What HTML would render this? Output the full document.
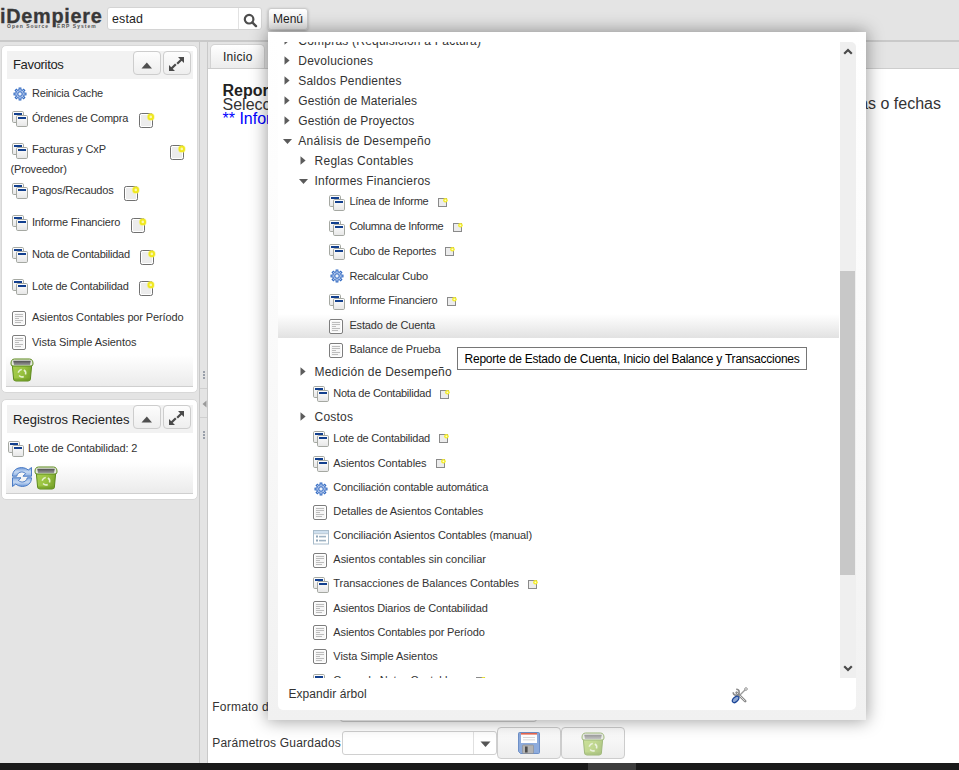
<!DOCTYPE html><html><head><meta charset="utf-8"><style>
*{box-sizing:border-box;margin:0;padding:0}
html,body{width:959px;height:770px;overflow:hidden;background:#e4e4e4;font-family:"Liberation Sans",sans-serif;color:#333}
.a{position:absolute}
.t{position:absolute;white-space:nowrap;line-height:1}
svg.a{overflow:visible}
</style></head><body>

<svg width="0" height="0" style="position:absolute">
<defs>
<linearGradient id="wg" x1="0" y1="0" x2="0" y2="1"><stop offset="0" stop-color="#ffffff"/><stop offset="1" stop-color="#e6e6e6"/></linearGradient>
<linearGradient id="bing" x1="0" y1="0" x2="1" y2="0.3"><stop offset="0" stop-color="#a8cf50"/><stop offset="0.6" stop-color="#98c23f"/><stop offset="1" stop-color="#7ea82f"/></linearGradient>
<linearGradient id="binin" x1="0" y1="0" x2="0" y2="1"><stop offset="0" stop-color="#4f4f4f"/><stop offset="1" stop-color="#9a9a9a"/></linearGradient>
<linearGradient id="refg" x1="0" y1="0" x2="0" y2="1"><stop offset="0" stop-color="#6f9ada"/><stop offset="0.5" stop-color="#c6d9f2"/><stop offset="1" stop-color="#8fb2e3"/></linearGradient>
<symbol id="win" viewBox="0 0 16 16">
 <rect x="0.5" y="0.5" width="11" height="11" rx="1.2" fill="url(#wg)" stroke="#a5a8a2"/>
 <rect x="2" y="2" width="8" height="2" fill="#123f8e"/>
 <rect x="4.5" y="4.5" width="11" height="11" rx="1.2" fill="url(#wg)" stroke="#a5a8a2"/>
 <rect x="6" y="6" width="8" height="2" fill="#123f8e"/>
</symbol>
<symbol id="doc" viewBox="0 0 16 16">
 <rect x="1.5" y="1.5" width="13" height="14" rx="1.5" fill="#fff" stroke="#7d7d7d"/>
 <rect x="3" y="3" width="10" height="11" fill="#f6f6f6"/>
 <rect x="4" y="4" width="8" height="1" fill="#bdbdbd"/>
 <rect x="4" y="6" width="8" height="1" fill="#bdbdbd"/>
 <rect x="4" y="8" width="4" height="1" fill="#bdbdbd"/>
 <rect x="4" y="10" width="8" height="1" fill="#bdbdbd"/>
 <rect x="4" y="12" width="6" height="1" fill="#bdbdbd"/>
</symbol>
<symbol id="gear" viewBox="0 0 14 14">
 <g fill="#2f68c1"><circle cx="7" cy="7" r="4.7"/><rect x="5.6" y="0.5" width="2.8" height="13" transform="rotate(0 7 7)"/><rect x="5.6" y="0.5" width="2.8" height="13" transform="rotate(45 7 7)"/><rect x="5.6" y="0.5" width="2.8" height="13" transform="rotate(90 7 7)"/><rect x="5.6" y="0.5" width="2.8" height="13" transform="rotate(135 7 7)"/></g>
 <g fill="#b0c5ea"><circle cx="7" cy="7" r="3.7"/><rect x="6.45" y="1.5" width="1.1" height="11" transform="rotate(0 7 7)"/><rect x="6.45" y="1.5" width="1.1" height="11" transform="rotate(45 7 7)"/><rect x="6.45" y="1.5" width="1.1" height="11" transform="rotate(90 7 7)"/><rect x="6.45" y="1.5" width="1.1" height="11" transform="rotate(135 7 7)"/></g>
 <circle cx="7" cy="7" r="2.3" fill="#c8d7f1" stroke="#3d72c6" stroke-width="1"/>
 <circle cx="7" cy="7" r="0.9" fill="#fff"/>
</symbol>
<symbol id="note9" viewBox="0 0 10 10">
 <rect x="0.5" y="0.5" width="8" height="8" fill="#ececec" stroke="#8a8a8a"/>
 <circle cx="7.4" cy="2.3" r="2.3" fill="#f3ec2c"/>
 <circle cx="7.4" cy="2.3" r="0.9" fill="#fdfbd0"/>
</symbol>
<symbol id="note14" viewBox="0 0 16 16">
 <rect x="0.5" y="0.5" width="13" height="14" rx="1.8" fill="#fff" stroke="#707070"/>
 <rect x="2" y="2" width="10" height="11" fill="#ececec"/>
 <circle cx="11.8" cy="3.9" r="3.9" fill="#f7f26a" opacity=".6"/>
 <circle cx="11.8" cy="3.9" r="3.2" fill="#f0e81e"/>
 <circle cx="11.8" cy="3.9" r="1.3" fill="#fbf7b0"/>
</symbol>
<symbol id="triR" viewBox="0 0 6 9"><path d="M0.5 0.3 L5.6 4.5 L0.5 8.7Z" fill="#5c5c5c"/></symbol>
<symbol id="triD" viewBox="0 0 9 6"><path d="M0 0 L9 0 L4.5 5Z" fill="#5a5a5a"/></symbol>
<symbol id="bin" viewBox="0 0 24 24">
 <path d="M2.3 7 L3.6 21 Q3.9 23 6 23 L18 23 Q20.1 23 20.4 21 L21.7 7Z" fill="url(#bing)" stroke="#5d8a1c" stroke-width="1"/>
 <rect x="3.5" y="20.5" width="17" height="2" fill="#6e9a26" opacity=".6"/>
 <path d="M1 6 Q0.8 1.2 4.5 1 L19.5 1 Q23.2 1.2 23 6 Q23 8 21 8 L3 8 Q1 8 1 6Z" fill="#e4e9dc" stroke="#5d8a1c" stroke-width="1"/>
 <path d="M3.2 2.8 L20.8 2.8 L20 7 L4 7Z" fill="url(#binin)"/>
 <circle cx="12" cy="15.2" r="3.7" fill="none" stroke="#e6f1cf" stroke-width="1.5" stroke-dasharray="5 2.75" transform="rotate(-60 12 15.2)"/>
</symbol>
<symbol id="refresh" viewBox="0 0 20 20">
 <path d="M0.5 9.2 C0.5 3.5 4.8 0.6 9.5 0.6 C12.3 0.6 14.6 1.6 16.2 3 L19.5 0.5 L19.5 9.2 L11 9.2 L13.6 6.6 C12.6 5.6 11.2 5 9.6 5 C7.2 5 5.2 6.6 4.7 9.2 Z" fill="url(#refg)" stroke="#3c70c0" stroke-width="0.9" stroke-linejoin="round"/>
 <path d="M0.5 9.2 C0.5 3.5 4.8 0.6 9.5 0.6 C12.3 0.6 14.6 1.6 16.2 3 L19.5 0.5 L19.5 9.2 L11 9.2 L13.6 6.6 C12.6 5.6 11.2 5 9.6 5 C7.2 5 5.2 6.6 4.7 9.2 Z" fill="url(#refg)" stroke="#3c70c0" stroke-width="0.9" stroke-linejoin="round" transform="rotate(180 10 10)"/>
</symbol>
<symbol id="list" viewBox="0 0 16 16"><rect x="0.5" y="0.5" width="15" height="13.5" fill="#fff" stroke="#a9bccb"/><rect x="1" y="1" width="14" height="2.6" fill="#cfe0ef"/><rect x="1" y="3.4" width="14" height="0.8" fill="#a9bccb"/><rect x="3" y="5.5" width="2" height="2" fill="#8fa5b8"/><rect x="6" y="5.8" width="7" height="1.6" fill="#9fb3c4"/><rect x="3" y="9.5" width="2" height="2" fill="#8fa5b8"/><rect x="6" y="9.8" width="7" height="1.6" fill="#9fb3c4"/></symbol></defs></svg>

<div class="a" style="left:0px;top:40px;width:959px;height:2px;background:#c9c9c9"></div>
<div class="t" style="left:0.3px;top:6.6px;font-size:19.3px;font-weight:bold;color:#383838;letter-spacing:0.7px;transform:scaleX(1.03);transform-origin:0 0;-webkit-text-stroke:0.3px #383838">iDempiere</div>
<div class="t" style="left:7px;top:23.6px;font-size:5px;font-weight:bold;color:#555;letter-spacing:1px">Open Source</div>
<div class="t" style="left:57px;top:23.6px;font-size:5px;font-weight:bold;color:#555;letter-spacing:1.05px">ERP System</div>
<div class="a" style="left:107px;top:7px;width:155px;height:23px;background:#fff;border:1px solid #d4d4d4;border-radius:3px"></div>
<div class="a" style="left:238px;top:8px;width:1px;height:21px;background:#e2e2e2"></div>
<div class="t" style="left:112px;top:12.70px;font-size:12.4px;color:#1e1e1e;letter-spacing:0.15px;">estad</div>
<svg class="a" style="left:243px;top:12.5px" width="15" height="15" viewBox="0 0 15 15"><circle cx="6.1" cy="6.2" r="4.3" fill="none" stroke="#4d4d4d" stroke-width="2.2"/><path d="M9.3 9.4 L13 13.1" stroke="#4d4d4d" stroke-width="2.4" stroke-linecap="round"/></svg>
<div class="a" style="left:268px;top:8px;width:40px;height:22px;background:linear-gradient(#ffffff,#e6e6e6);border:1px solid #cbcbcb;border-radius:3px;box-shadow:0 1px 3px rgba(0,0,0,.28)"></div>
<div class="t" style="left:273px;top:13.44px;font-size:12px;color:#1e1e1e;letter-spacing:0.0px;">Menú</div>
<div class="a" style="left:0px;top:42px;width:199px;height:721px;background:#e4e4e4"></div>
<div class="a" style="left:1px;top:45px;width:197px;height:348px;background:#fff;border:1px solid #d8d8d8;border-radius:5px"></div>
<div class="a" style="left:7px;top:51px;width:186px;height:28px;background:#f2f2f2"></div>
<div class="t" style="left:13px;top:58.30px;font-size:13px;color:#222;letter-spacing:-0.325px;">Favoritos</div>
<div class="a" style="left:133px;top:51px;width:28px;height:24px;background:linear-gradient(#fdfdfd,#eeeeee);border:1px solid #cdcdcd;border-radius:4px"></div>
<div class="a" style="left:163px;top:51px;width:28px;height:24px;background:linear-gradient(#fdfdfd,#eeeeee);border:1px solid #cdcdcd;border-radius:4px"></div>
<svg class="a" style="left:141px;top:61px" width="12" height="8"><path d="M0.5 7.5 L5.8 1.5 L11 7.5Z" fill="#4f4f4f"/></svg>
<svg class="a" style="left:168px;top:56px" width="17" height="16"><path d="M10 1 L16 1 L16 7Z M1 9 L1 15 L7 15Z" fill="#4a4a4a"/><path d="M13.5 3.5 L9.2 7.8 M3.5 12.5 L7.8 8.2" stroke="#4a4a4a" stroke-width="2.2"/></svg>
<svg class="a" style="left:12.5px;top:87px" width="14" height="14" viewBox="0 0 14 14"><use href="#gear"/></svg>
<div class="t" style="left:32px;top:87.99px;font-size:11px;color:#333;letter-spacing:-0.216px;">Reinicia Cache</div>
<svg class="a" style="left:12px;top:111px" width="16" height="16" viewBox="0 0 16 16"><use href="#win"/></svg>
<div class="t" style="left:32px;top:112.79px;font-size:11px;color:#333;letter-spacing:-0.208px;">Órdenes de Compra</div>
<svg class="a" style="left:139px;top:113px" width="16" height="16" viewBox="0 0 16 16"><use href="#note14"/></svg>
<svg class="a" style="left:12px;top:143px" width="16" height="16" viewBox="0 0 16 16"><use href="#win"/></svg>
<div class="t" style="left:32px;top:144.09px;font-size:11px;color:#333;letter-spacing:-0.093px;">Facturas y CxP</div>
<svg class="a" style="left:170px;top:145px" width="16" height="16" viewBox="0 0 16 16"><use href="#note14"/></svg>
<div class="t" style="left:10.5px;top:163.69px;font-size:11px;color:#333;letter-spacing:-0.17px;">(Proveedor)</div>
<svg class="a" style="left:12px;top:183px" width="16" height="16" viewBox="0 0 16 16"><use href="#win"/></svg>
<div class="t" style="left:32px;top:184.99px;font-size:11px;color:#333;letter-spacing:-0.155px;">Pagos/Recaudos</div>
<svg class="a" style="left:124px;top:186px" width="16" height="16" viewBox="0 0 16 16"><use href="#note14"/></svg>
<svg class="a" style="left:12px;top:215px" width="16" height="16" viewBox="0 0 16 16"><use href="#win"/></svg>
<div class="t" style="left:32px;top:217.29px;font-size:11px;color:#333;letter-spacing:-0.201px;">Informe Financiero</div>
<svg class="a" style="left:131px;top:218px" width="16" height="16" viewBox="0 0 16 16"><use href="#note14"/></svg>
<svg class="a" style="left:12px;top:247px" width="16" height="16" viewBox="0 0 16 16"><use href="#win"/></svg>
<div class="t" style="left:32px;top:248.99px;font-size:11px;color:#333;letter-spacing:-0.249px;">Nota de Contabilidad</div>
<svg class="a" style="left:140px;top:250px" width="16" height="16" viewBox="0 0 16 16"><use href="#note14"/></svg>
<svg class="a" style="left:12px;top:279px" width="16" height="16" viewBox="0 0 16 16"><use href="#win"/></svg>
<div class="t" style="left:32px;top:280.99px;font-size:11px;color:#333;letter-spacing:-0.212px;">Lote de Contabilidad</div>
<svg class="a" style="left:139px;top:281px" width="16" height="16" viewBox="0 0 16 16"><use href="#note14"/></svg>
<svg class="a" style="left:11px;top:310px" width="16" height="16" viewBox="0 0 16 16"><use href="#doc"/></svg>
<div class="t" style="left:32px;top:311.89px;font-size:11px;color:#333;letter-spacing:-0.129px;">Asientos Contables por Período</div>
<svg class="a" style="left:11px;top:334px" width="16" height="16" viewBox="0 0 16 16"><use href="#doc"/></svg>
<div class="t" style="left:32px;top:336.69px;font-size:11px;color:#333;letter-spacing:-0.056px;">Vista Simple Asientos</div>
<div class="a" style="left:6px;top:355px;width:187px;height:32px;background:linear-gradient(#ffffff,#ebebeb);border-bottom:1px solid #cfcfcf"></div>
<svg class="a" style="left:10px;top:358px" width="24" height="24" viewBox="0 0 24 24"><use href="#bin"/></svg>
<div class="a" style="left:1px;top:399px;width:197px;height:101px;background:#fff;border:1px solid #d8d8d8;border-radius:5px"></div>
<div class="a" style="left:7px;top:405px;width:186px;height:28px;background:#f2f2f2"></div>
<div class="t" style="left:13px;top:412.50px;font-size:13px;color:#222;letter-spacing:0.011px;">Registros Recientes</div>
<div class="a" style="left:133px;top:405px;width:28px;height:24px;background:linear-gradient(#fdfdfd,#eeeeee);border:1px solid #cdcdcd;border-radius:4px"></div>
<div class="a" style="left:163px;top:405px;width:28px;height:24px;background:linear-gradient(#fdfdfd,#eeeeee);border:1px solid #cdcdcd;border-radius:4px"></div>
<svg class="a" style="left:141px;top:415px" width="12" height="8"><path d="M0.5 7.5 L5.8 1.5 L11 7.5Z" fill="#4f4f4f"/></svg>
<svg class="a" style="left:168px;top:410px" width="17" height="16"><path d="M10 1 L16 1 L16 7Z M1 9 L1 15 L7 15Z" fill="#4a4a4a"/><path d="M13.5 3.5 L9.2 7.8 M3.5 12.5 L7.8 8.2" stroke="#4a4a4a" stroke-width="2.2"/></svg>
<svg class="a" style="left:8px;top:441px" width="16" height="16" viewBox="0 0 16 16"><use href="#win"/></svg>
<div class="t" style="left:28px;top:443.29px;font-size:11px;color:#333;letter-spacing:-0.17px;">Lote de Contabilidad: 2</div>
<div class="a" style="left:6px;top:462px;width:187px;height:32px;background:linear-gradient(#ffffff,#ebebeb);border-bottom:1px solid #cfcfcf"></div>
<svg class="a" style="left:12px;top:467px" width="20" height="20" viewBox="0 0 20 20"><use href="#refresh"/></svg>
<svg class="a" style="left:34px;top:466px" width="24" height="24" viewBox="0 0 24 24"><use href="#bin"/></svg>
<div class="a" style="left:199px;top:42px;width:1px;height:721px;background:#c9c9c9"></div>
<div class="a" style="left:207px;top:42px;width:1px;height:721px;background:#c9c9c9"></div>
<div class="a" style="left:200px;top:388px;width:7px;height:1px;background:#cfcfcf"></div>
<div class="a" style="left:200px;top:417px;width:7px;height:1px;background:#cfcfcf"></div>
<div class="a" style="left:203px;top:371px;width:2px;height:2px;background:#9aa0aa"></div>
<div class="a" style="left:203px;top:374px;width:2px;height:2px;background:#9aa0aa"></div>
<div class="a" style="left:203px;top:377px;width:2px;height:2px;background:#9aa0aa"></div>
<div class="a" style="left:203px;top:431px;width:2px;height:2px;background:#9aa0aa"></div>
<div class="a" style="left:203px;top:434px;width:2px;height:2px;background:#9aa0aa"></div>
<div class="a" style="left:203px;top:437px;width:2px;height:2px;background:#9aa0aa"></div>
<svg class="a" style="left:202px;top:400px" width="5" height="8"><path d="M4.5 0.5 L0.5 4 L4.5 7.5Z" fill="#9a9a9a"/></svg>
<div class="a" style="left:208px;top:42px;width:751px;height:27px;background:#e4e4e4;border-bottom:1px solid #cdcdcd"></div>
<div class="a" style="left:210px;top:44px;width:55px;height:24px;background:linear-gradient(#ffffff,#ececec);border:1px solid #d3d3d3;border-bottom:none;border-radius:5px 5px 0 0"></div>
<div class="t" style="left:223px;top:51.14px;font-size:12px;color:#222;letter-spacing:0.28px;">Inicio</div>
<div class="a" style="left:208px;top:69px;width:751px;height:694px;background:#fff"></div>
<div class="t" style="left:222.5px;top:82.56px;font-size:16px;color:#222;font-weight:bold;">Reporte de Estado de Cuenta</div>
<div class="t" style="left:222.5px;top:96.66px;font-size:16px;color:#333;">Seleccione</div>
<div class="t" style="right:18px;top:96.2px;font-size:16px;color:#333">cuentas o fechas</div>
<div class="t" style="left:222.5px;top:110.66px;font-size:16px;color:#0000ff;">** Informe</div>
<div class="t" style="left:212.3px;top:701.24px;font-size:12px;color:#333;letter-spacing:0.22px;">Formato de Impresión</div>
<div class="a" style="left:340px;top:699px;width:197px;height:23px;background:#fff;border:1px solid #cfcfcf;border-radius:3px"></div>
<div class="t" style="left:212.3px;top:736.94px;font-size:12px;color:#333;letter-spacing:0.198px;">Parámetros Guardados</div>
<div class="a" style="left:342px;top:731px;width:155px;height:24px;background:#fff;border:1px solid #d0d0d0;border-radius:3px"></div>
<div class="a" style="left:473px;top:732px;width:1px;height:22px;background:#e0e0e0"></div>
<svg class="a" style="left:480px;top:741px" width="11" height="7"><path d="M0.5 0.5 L10.5 0.5 L5.5 6Z" fill="#555"/></svg>
<div class="a" style="left:497px;top:727px;width:64px;height:32px;background:linear-gradient(#fdfdfd,#eeeeee);border:1px solid #cdcdcd;border-radius:4px"></div>
<div class="a" style="left:561px;top:727px;width:64px;height:32px;background:linear-gradient(#fdfdfd,#eeeeee);border:1px solid #cdcdcd;border-radius:4px"></div>
<svg class="a" style="left:518px;top:732px" width="22" height="22" viewBox="0 0 22 22"><path d="M0.5 1.5 Q0.5 0.5 1.5 0.5 L20.5 0.5 Q21.5 0.5 21.5 1.5 L21.5 20.5 Q21.5 21.5 20.5 21.5 L2.5 21.5 L0.5 19.5Z" fill="#8dabdc" stroke="#6e90c8"/><rect x="3" y="1" width="16" height="10" fill="#fff"/><rect x="3" y="1" width="16" height="1.6" fill="#e8674f"/><rect x="5" y="5" width="12" height="0.8" fill="#cfcfcf"/><rect x="5" y="7.5" width="12" height="0.8" fill="#cfcfcf"/><rect x="4.5" y="13" width="11" height="8.5" rx="1" fill="#b3b3b3" stroke="#8c8c8c" stroke-width=".6"/><rect x="7" y="14.5" width="2.6" height="6" fill="#4a4a4a"/></svg>
<svg class="a" style="left:581px;top:732px;opacity:.55" width="24" height="24"><use href="#bin"/></svg>
<div class="a" style="left:0px;top:763px;width:959px;height:7px;background:#1a1a1a"></div>
<div class="a" style="left:588px;top:763px;width:48px;height:7px;background:#3d3d3d"></div>
<div class="a" style="left:268px;top:32px;width:598px;height:688px;background:linear-gradient(#ffffff 0%,#fcfcfc 30%,#f6f6f6 70%,#f1f1f1 100%);box-shadow:0 0 16px 1px rgba(0,0,0,.38)"></div>
<div class="a" style="left:278px;top:36px;width:578px;height:674px;background:#fff;border-radius:0 0 5px 5px"></div>
<div class="a" style="left:278px;top:314px;width:561px;height:24px;background:linear-gradient(#ffffff,#e2e2e2)"></div>
<div class="a" style="left:278px;top:42px;width:562px;height:636px;overflow:hidden">
<svg class="a" style="left:6.4px;top:-6.2px" width="6" height="9" viewBox="0 0 6 9"><use href="#triR"/></svg>
<div class="t" style="left:20.3px;top:-7.06px;font-size:12px;color:#333;letter-spacing:0.22px;">Compras (Requisición a Factura)</div>
<svg class="a" style="left:6.4px;top:13.8px" width="6" height="9" viewBox="0 0 6 9"><use href="#triR"/></svg>
<div class="t" style="left:20.3px;top:12.94px;font-size:12px;color:#333;letter-spacing:0.238px;">Devoluciones</div>
<svg class="a" style="left:6.4px;top:33.6px" width="6" height="9" viewBox="0 0 6 9"><use href="#triR"/></svg>
<div class="t" style="left:20.3px;top:32.74px;font-size:12px;color:#333;letter-spacing:0.189px;">Saldos Pendientes</div>
<svg class="a" style="left:6.4px;top:53.5px" width="6" height="9" viewBox="0 0 6 9"><use href="#triR"/></svg>
<div class="t" style="left:20.3px;top:52.64px;font-size:12px;color:#333;letter-spacing:0.095px;">Gestión de Materiales</div>
<svg class="a" style="left:6.4px;top:73.8px" width="6" height="9" viewBox="0 0 6 9"><use href="#triR"/></svg>
<div class="t" style="left:20.3px;top:72.94px;font-size:12px;color:#333;letter-spacing:0.062px;">Gestión de Proyectos</div>
<svg class="a" style="left:4.9px;top:96.9px" width="9" height="6" viewBox="0 0 9 6"><use href="#triD"/></svg>
<div class="t" style="left:20.3px;top:93.04px;font-size:12px;color:#333;letter-spacing:0.31px;">Análisis de Desempeño</div>
<svg class="a" style="left:22.3px;top:113.6px" width="6" height="9" viewBox="0 0 6 9"><use href="#triR"/></svg>
<div class="t" style="left:36.5px;top:112.74px;font-size:12px;color:#333;letter-spacing:0.273px;">Reglas Contables</div>
<svg class="a" style="left:20.8px;top:136.7px" width="9" height="6" viewBox="0 0 9 6"><use href="#triD"/></svg>
<div class="t" style="left:36.5px;top:132.84px;font-size:12px;color:#333;letter-spacing:0.198px;">Informes Financieros</div>
<svg class="a" style="left:51px;top:153.0px" width="16" height="16" viewBox="0 0 16 16"><use href="#win"/></svg>
<div class="t" style="left:71.4px;top:154.39px;font-size:11px;color:#333;letter-spacing:-0.257px;">Línea de Informe</div>
<svg class="a" style="left:160px;top:156.0px" width="10" height="10" viewBox="0 0 10 10"><use href="#note9"/></svg>
<svg class="a" style="left:51px;top:177.7px" width="16" height="16" viewBox="0 0 16 16"><use href="#win"/></svg>
<div class="t" style="left:71.4px;top:179.09px;font-size:11px;color:#333;letter-spacing:-0.315px;">Columna de Informe</div>
<svg class="a" style="left:175px;top:180.7px" width="10" height="10" viewBox="0 0 10 10"><use href="#note9"/></svg>
<svg class="a" style="left:51px;top:202.4px" width="16" height="16" viewBox="0 0 16 16"><use href="#win"/></svg>
<div class="t" style="left:71.4px;top:203.79px;font-size:11px;color:#333;letter-spacing:-0.163px;">Cubo de Reportes</div>
<svg class="a" style="left:167px;top:205.4px" width="10" height="10" viewBox="0 0 10 10"><use href="#note9"/></svg>
<svg class="a" style="left:51.5px;top:227.4px" width="14" height="14" viewBox="0 0 14 14"><use href="#gear"/></svg>
<div class="t" style="left:71.4px;top:228.99px;font-size:11px;color:#333;letter-spacing:-0.192px;">Recalcular Cubo</div>
<svg class="a" style="left:51px;top:252.1px" width="16" height="16" viewBox="0 0 16 16"><use href="#win"/></svg>
<div class="t" style="left:71.4px;top:253.49px;font-size:11px;color:#333;letter-spacing:-0.201px;">Informe Financiero</div>
<svg class="a" style="left:169px;top:255.1px" width="10" height="10" viewBox="0 0 10 10"><use href="#note9"/></svg>
<svg class="a" style="left:50px;top:275.5px" width="16" height="16" viewBox="0 0 16 16"><use href="#doc"/></svg>
<div class="t" style="left:71.4px;top:277.89px;font-size:11px;color:#333;letter-spacing:-0.15px;">Estado de Cuenta</div>
<svg class="a" style="left:50px;top:299.5px" width="16" height="16" viewBox="0 0 16 16"><use href="#doc"/></svg>
<div class="t" style="left:71.4px;top:301.89px;font-size:11px;color:#333;letter-spacing:-0.15px;">Balance de Prueba</div>
<svg class="a" style="left:22.3px;top:325.1px" width="6" height="9" viewBox="0 0 6 9"><use href="#triR"/></svg>
<div class="t" style="left:36.5px;top:324.24px;font-size:12px;color:#333;letter-spacing:0.22px;">Medición de Desempeño</div>
<svg class="a" style="left:35.3px;top:344.1px" width="16" height="16" viewBox="0 0 16 16"><use href="#win"/></svg>
<div class="t" style="left:55.3px;top:346.49px;font-size:11px;color:#333;letter-spacing:-0.249px;">Nota de Contabilidad</div>
<svg class="a" style="left:162px;top:348.1px" width="10" height="10" viewBox="0 0 10 10"><use href="#note9"/></svg>
<svg class="a" style="left:22.3px;top:369.9px" width="6" height="9" viewBox="0 0 6 9"><use href="#triR"/></svg>
<div class="t" style="left:36.5px;top:369.04px;font-size:12px;color:#333;letter-spacing:0.22px;">Costos</div>
<svg class="a" style="left:35.3px;top:389.3px" width="16" height="16" viewBox="0 0 16 16"><use href="#win"/></svg>
<div class="t" style="left:55.3px;top:390.69px;font-size:11px;color:#333;letter-spacing:-0.212px;">Lote de Contabilidad</div>
<svg class="a" style="left:161px;top:392.3px" width="10" height="10" viewBox="0 0 10 10"><use href="#note9"/></svg>
<svg class="a" style="left:35.3px;top:414.4px" width="16" height="16" viewBox="0 0 16 16"><use href="#win"/></svg>
<div class="t" style="left:55.3px;top:415.79px;font-size:11px;color:#333;letter-spacing:-0.091px;">Asientos Contables</div>
<svg class="a" style="left:158px;top:417.4px" width="10" height="10" viewBox="0 0 10 10"><use href="#note9"/></svg>
<svg class="a" style="left:35.8px;top:439.5px" width="14" height="14" viewBox="0 0 14 14"><use href="#gear"/></svg>
<div class="t" style="left:55.3px;top:440.09px;font-size:11px;color:#333;letter-spacing:-0.188px;">Conciliación contable automática</div>
<svg class="a" style="left:34.3px;top:461.5px" width="16" height="16" viewBox="0 0 16 16"><use href="#doc"/></svg>
<div class="t" style="left:55.3px;top:463.89px;font-size:11px;color:#333;letter-spacing:-0.081px;">Detalles de Asientos Contables</div>
<svg class="a" style="left:35.3px;top:487.6px" width="16" height="16" viewBox="0 0 16 16"><use href="#list"/></svg>
<div class="t" style="left:55.3px;top:487.79px;font-size:11px;color:#333;letter-spacing:-0.109px;">Conciliación Asientos Contables (manual)</div>
<svg class="a" style="left:34.3px;top:510.0px" width="16" height="16" viewBox="0 0 16 16"><use href="#doc"/></svg>
<div class="t" style="left:55.3px;top:512.39px;font-size:11px;color:#333;letter-spacing:-0.008px;">Asientos contables sin conciliar</div>
<svg class="a" style="left:35.3px;top:535.0px" width="16" height="16" viewBox="0 0 16 16"><use href="#win"/></svg>
<div class="t" style="left:55.3px;top:536.39px;font-size:11px;color:#333;letter-spacing:-0.044px;">Transacciones de Balances Contables</div>
<svg class="a" style="left:250px;top:538.0px" width="10" height="10" viewBox="0 0 10 10"><use href="#note9"/></svg>
<svg class="a" style="left:34.3px;top:558.4px" width="16" height="16" viewBox="0 0 16 16"><use href="#doc"/></svg>
<div class="t" style="left:55.3px;top:560.79px;font-size:11px;color:#333;letter-spacing:-0.144px;">Asientos Diarios de Contabilidad</div>
<svg class="a" style="left:34.3px;top:582.3px" width="16" height="16" viewBox="0 0 16 16"><use href="#doc"/></svg>
<div class="t" style="left:55.3px;top:584.69px;font-size:11px;color:#333;letter-spacing:-0.129px;">Asientos Contables por Período</div>
<svg class="a" style="left:34.3px;top:606.4px" width="16" height="16" viewBox="0 0 16 16"><use href="#doc"/></svg>
<div class="t" style="left:55.3px;top:608.79px;font-size:11px;color:#333;letter-spacing:-0.056px;">Vista Simple Asientos</div>
<svg class="a" style="left:35.3px;top:631.8px" width="16" height="16" viewBox="0 0 16 16"><use href="#win"/></svg>
<div class="t" style="left:55.3px;top:633.19px;font-size:11px;color:#333;letter-spacing:-0.15px;">Cruce de Notas Contables</div>
<svg class="a" style="left:198px;top:634.8px" width="10" height="10" viewBox="0 0 10 10"><use href="#note9"/></svg>
</div>
<div class="a" style="left:840px;top:42px;width:16px;height:636px;background:#efefef;border-radius:0 5px 0 0"></div>
<div class="a" style="left:840px;top:271px;width:15px;height:304px;background:#c8c8c8"></div>
<svg class="a" style="left:843px;top:47px" width="10" height="8"><path d="M1.2 6.8 L5 3 L8.8 6.8" fill="none" stroke="#4a4a4a" stroke-width="2.2"/></svg>
<svg class="a" style="left:843px;top:665px" width="10" height="8"><path d="M1.2 1.2 L5 5 L8.8 1.2" fill="none" stroke="#4a4a4a" stroke-width="2.2"/></svg>
<div class="t" style="left:288.4px;top:688.04px;font-size:12px;color:#333;letter-spacing:0.062px;">Expandir árbol</div>
<svg class="a" style="left:731px;top:687px" width="17" height="17" viewBox="0 0 17 17"><path d="M5.6 5.6 L14.2 14.2" stroke="#8a8a8a" stroke-width="2.6" stroke-linecap="round"/><path d="M6.2 6.2 L13.6 13.6" stroke="#e6e6e6" stroke-width="0.9" stroke-linecap="round"/><path d="M2.2 5.2 A3 3 0 1 0 5.2 2.2" fill="none" stroke="#8a8a8a" stroke-width="1.5"/><path d="M15 2 L8.2 8.8" stroke="#9a9a9a" stroke-width="1.3"/><circle cx="15" cy="2" r="1.3" fill="#fff" stroke="#8a8a8a" stroke-width="0.9"/><ellipse cx="4.6" cy="12.4" rx="3.9" ry="2.3" transform="rotate(-45 4.6 12.4)" fill="#8ea8d4" stroke="#1c4697" stroke-width="1.2"/></svg>
<div class="a" style="left:457px;top:347px;width:350px;height:23px;background:#fff;border:1px solid #767676"></div>
<div class="t" style="left:464.5px;top:353.34px;font-size:12px;color:#000;letter-spacing:-0.23px;">Reporte de Estado de Cuenta, Inicio del Balance y Transacciones</div>
</body></html>
